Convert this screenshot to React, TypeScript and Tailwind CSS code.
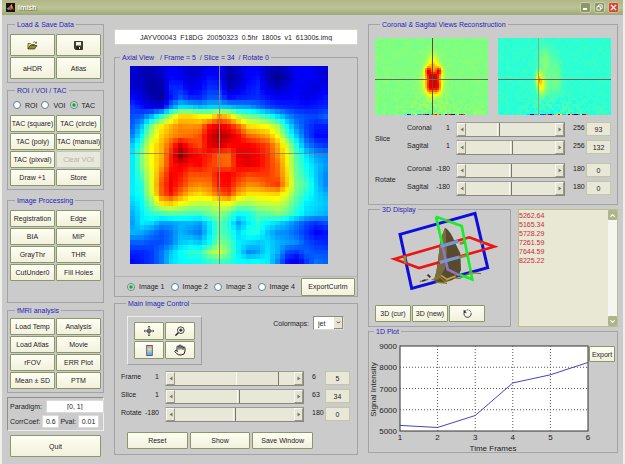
import React from 'react';
import { Hand, ChevronDown, ChevronUp } from 'lucide-react';

// Coarse axial slice, 0 = dark blue, 99 = dark red
const AXIAL: number[][] = [
  [8, 6, 5, 8, 12, 10, 7, 8, 11, 12, 5, 8, 12, 12, 6, 5, 8, 12, 12, 10, 9],
  [8, 6, 4, 6, 13, 12, 8, 10, 14, 13, 2, 6, 12, 14, 6, 1, 5, 11, 12, 11, 8],
  [8, 7, 3, 4, 16, 16, 10, 12, 17, 16, 5, 9, 14, 16, 9, 6, 9, 12, 10, 9, 11],
  [13, 9, 5, 3, 14, 21, 16, 16, 21, 21, 13, 15, 16, 17, 14, 12, 12, 13, 10, 12, 14],
  [18, 14, 10, 10, 25, 35, 34, 31, 33, 33, 32, 29, 28, 24, 20, 17, 16, 15, 14, 15, 16],
  [20, 22, 30, 42, 56, 66, 66, 63, 62, 72, 67, 55, 50, 47, 42, 35, 27, 22, 20, 19, 22],
  [22, 32, 50, 64, 70, 74, 73, 74, 86, 90, 86, 78, 66, 64, 62, 54, 38, 26, 19, 15, 15],
  [26, 38, 56, 67, 73, 76, 77, 80, 91, 96, 93, 87, 78, 75, 71, 62, 46, 32, 20, 13, 13],
  [33, 45, 62, 70, 80, 92, 84, 80, 90, 92, 87, 88, 88, 85, 81, 71, 58, 40, 26, 20, 18],
  [36, 50, 63, 70, 85, 99, 90, 87, 84, 78, 77, 90, 90, 88, 83, 74, 63, 45, 35, 28, 26],
  [36, 50, 62, 71, 85, 89, 86, 88, 82, 79, 77, 88, 90, 88, 83, 77, 64, 47, 38, 32, 28],
  [36, 46, 60, 76, 88, 86, 80, 80, 80, 87, 88, 84, 81, 82, 82, 78, 66, 48, 40, 32, 26],
  [36, 42, 60, 79, 89, 83, 76, 74, 76, 86, 87, 79, 74, 75, 79, 82, 68, 50, 44, 33, 26],
  [36, 40, 58, 78, 86, 76, 68, 66, 70, 78, 82, 70, 65, 65, 66, 67, 60, 48, 40, 34, 30],
  [33, 38, 50, 65, 68, 62, 58, 56, 56, 60, 62, 54, 53, 56, 57, 58, 53, 44, 36, 34, 32],
  [30, 36, 42, 44, 46, 46, 44, 44, 48, 52, 46, 38, 40, 46, 47, 50, 47, 40, 34, 32, 30],
  [28, 36, 34, 28, 28, 30, 30, 28, 36, 46, 40, 28, 36, 42, 37, 34, 30, 25, 20, 17, 20],
  [30, 29, 25, 21, 24, 30, 27, 24, 35, 46, 42, 34, 40, 40, 32, 27, 26, 22, 17, 12, 14],
  [22, 22, 20, 20, 24, 32, 34, 32, 38, 50, 46, 36, 34, 32, 34, 30, 28, 26, 20, 17, 16],
  [16, 16, 18, 24, 32, 38, 42, 42, 52, 58, 48, 36, 26, 28, 35, 30, 20, 18, 22, 20, 20],
  [13, 15, 18, 24, 34, 37, 38, 38, 42, 44, 42, 38, 37, 38, 36, 26, 14, 10, 18, 24, 22],
];

const clamp = (v: number) => Math.max(0, Math.min(1, v));

const jet = (v: number) => {
  const t = clamp(v) * 4;
  const channel = (center: number) => Math.round(255 * clamp(1.5 - Math.abs(t - center)));
  return `rgb(${channel(3)},${channel(2)},${channel(1)})`;
};

// x and y run from 0 to 1
const sampleAxial = (x: number, y: number) => {
  const gx = x * 20;
  const gy = y * 20;
  const i = Math.min(19, Math.floor(gx));
  const j = Math.min(19, Math.floor(gy));
  const u = gx - i;
  const v = gy - j;
  const top = AXIAL[j][i] * (1 - u) + AXIAL[j][i + 1] * u;
  const bottom = AXIAL[j + 1][i] * (1 - u) + AXIAL[j + 1][i + 1] * u;
  return (top * (1 - v) + bottom * v) / 100;
};

const noise = (x: number, y: number) => {
  const s = Math.sin(x * 127.1 + y * 311.7) * 43758.5453;
  return s - Math.floor(s) - 0.5;
};

// [cx, cy, rx, ry, height]
type Blob = [number, number, number, number, number];

const CORONAL_BLOBS: Blob[] = [
  [57, 42, 9, 15, 0.18],
  [57, 26, 5, 10, 0.13],
  [52, 32, 3, 4, 0.3],
  [63, 32, 3, 4, 0.3],
  [57, 38, 6, 4, 0.26],
  [54, 47, 4, 7, 0.28],
  [61, 47, 4, 7, 0.28],
];

const SAGITTAL_BLOBS: Blob[] = [
  [40, 40, 3, 7, 0.24],
  [43, 48, 4, 9, 0.14],
  [46, 24, 6, 16, 0.09],
  [57, 34, 5, 16, 0.06],
  [50, 48, 13, 12, 0.04],
];

const project = (blobs: Blob[], base: number, x: number, y: number) => {
  let v = base;
  blobs.forEach(([cx, cy, rx, ry, h]) => {
    v += h * Math.exp(-(((x - cx) / rx) ** 2) - ((y - cy) / ry) ** 2);
  });
  const spread = 0.02 + (y > 52 ? (y - 52) * 0.004 : 0) * Math.exp(-(((x - 58) / 36) ** 2));
  v += noise(x, y) * spread;
  if (y >= 75 && x > 26 && x < 90) v += noise(x + 7, y) * 1.1;
  return Math.min(0.91, v);
};

const AxialMap = () => {
  const n = 41;
  return (
    <svg viewBox={`0 0 ${n} ${n}`} className="block aspect-square w-full" shapeRendering="crispEdges" role="img" aria-label="Axial slice">
      {Array.from({ length: n * n }, (_, k) => {
        const x = k % n;
        const y = Math.floor(k / n);
        return <rect key={k} x={x} y={y} width={1.05} height={1.05} fill={jet(sampleAxial(x / (n - 1), y / (n - 1)))} />;
      })}
      <path d="M18.5 0V41" stroke="#8c8380" strokeWidth={0.2} />
      <path d="M0 18.1H41" stroke="#806a68" strokeWidth={0.2} strokeOpacity={0.7} />
    </svg>
  );
};

interface ProjectionProps {
  label: string;
  blobs: Blob[];
  base: number;
  cx: number;
  lineColor: string;
}

const Projection = ({ label, blobs, base, cx, lineColor }: ProjectionProps) => {
  const cells = [];
  for (let y = 0; y < 77; y += 2) {
    for (let x = 0; x < 113; x += 2) {
      cells.push(<rect key={`${x}-${y}`} x={x} y={y} width={2.1} height={2.1} fill={jet(project(blobs, base, x, y))} />);
    }
  }
  return (
    <svg viewBox="0 0 113 77" className="block min-w-0 flex-1" shapeRendering="crispEdges" role="img" aria-label={label}>
      {cells}
      <path d={`M${cx} 0V77`} stroke={lineColor} strokeWidth={1} />
      <path d="M0 41H113" stroke="#6c6458" strokeWidth={1} />
    </svg>
  );
};

const Button = ({ className = 'h-[17px]', children, ...rest }: React.ButtonHTMLAttributes<HTMLButtonElement>) => (
  <button
    type="button"
    className={`flex min-w-0 items-center justify-center whitespace-nowrap rounded-[1px] border border-[#8a9767] bg-linear-to-b from-[#fefef4] to-[#f2f1dc] disabled:border-[#c6c8b4] disabled:bg-none disabled:bg-[#e9e8dc] disabled:text-[#b5b4a6] ${className}`}
    {...rest}
  >
    {children}
  </button>
);

interface PanelProps {
  title: string;
  className?: string;
  children: React.ReactNode;
}

const Panel = ({ title, className = '', children }: PanelProps) => (
  <fieldset className={`min-w-0 border border-[#a3a3a3] ${className}`}>
    <legend className="ml-[5px] px-[2px] leading-[9px] whitespace-pre text-[#2a22b8]">{title}</legend>
    {children}
  </fieldset>
);

interface RadioProps {
  name: string;
  label: string;
  defaultChecked?: boolean;
}

const Radio = ({ name, label, defaultChecked }: RadioProps) => (
  <label className="flex items-center gap-1 whitespace-nowrap">
    <input
      type="radio"
      name={name}
      defaultChecked={defaultChecked}
      className="size-2 shrink-0 appearance-none rounded-full border border-[#5f7d96] bg-white checked:bg-[radial-gradient(circle,#2ba02b_0_1px,#ffffff_3px)]"
    />
    {label}
  </label>
);

const ArrowButton = ({ dir, label }: { dir: 'left' | 'right'; label: string }) => (
  <button type="button" aria-label={label} className="flex w-[9px] shrink-0 items-center justify-center border border-t-[#f8f8f0] border-r-[#98978a] border-b-[#98978a] border-l-[#f8f8f0] bg-[#e6e4d2]">
    <svg viewBox="0 0 4 5" className="h-[5px] w-1 fill-[#77766c]">
      <path d={dir === 'left' ? 'M3.5 0.5V4.5L0.5 2.5Z' : 'M0.5 0.5V4.5L3.5 2.5Z'} />
    </svg>
  </button>
);

interface SliderRowProps {
  label: string;
  name: string;
  min: number;
  max: number;
  value: number;
  labelWidth: string;
  wideThumb?: boolean;
}

const SliderRow = ({ label, name, min, max, value: initial, labelWidth, wideThumb }: SliderRowProps) => {
  const [value, setValue] = React.useState(initial);
  const id = React.useId();
  const thumb = wideThumb ? '[&::-webkit-slider-thumb]:w-[43px]' : '[&::-webkit-slider-thumb]:w-[3px]';
  return (
    <div className="flex h-[15px] items-start">
      <label htmlFor={id} className={`flex shrink-0 justify-between leading-3 ${labelWidth}`}>
        <span>{label}</span>
        <span>{min}</span>
      </label>
      <div className="mx-[6px] flex h-[15px] min-w-0 flex-1 border border-t-[#9c9b90] border-r-[#8a897e] border-b-[#8a897e] border-l-[#c4c3b8]">
        <ArrowButton dir="left" label={`Decrease ${name}`} />
        <input
          id={id}
          type="range"
          min={min}
          max={max}
          value={value}
          onChange={(e) => setValue(Number(e.target.value))}
          className={`h-full min-w-0 flex-1 appearance-none bg-[#e9e8d8] [&::-webkit-slider-thumb]:h-[13px] [&::-webkit-slider-thumb]:appearance-none [&::-webkit-slider-thumb]:border-r [&::-webkit-slider-thumb]:border-l [&::-webkit-slider-thumb]:border-l-[#fbfbf4] [&::-webkit-slider-thumb]:border-r-[#77766c] [&::-webkit-slider-thumb]:bg-[#e6e4d2] ${thumb}`}
        />
        <ArrowButton dir="right" label={`Increase ${name}`} />
      </div>
      <span className="w-[15px] shrink-0 pl-[2px] leading-3">{max}</span>
      <input
        readOnly
        value={value}
        aria-label={`${name} value`}
        className="h-[14px] w-[25px] shrink-0 border border-[#c3c8a4] bg-[#e9e8d8] text-center"
      />
    </div>
  );
};

const OpenIcon = () => (
  <svg viewBox="0 0 22 18" className="h-[9px] w-[11px]">
    <path d="M2 16V5H7L9 7H15V9" fill="#f0e878" stroke="#2d2d12" strokeWidth="1.4" />
    <path d="M2 16L6 9H20L15 16Z" fill="#8e8c2e" stroke="#2d2d12" strokeWidth="1.4" />
    <path d="M12 3C14 1 17 1 18 4M16 4.5H19V1.5" fill="none" stroke="#222" strokeWidth="1.2" />
  </svg>
);

const SaveIcon = () => (
  <svg viewBox="0 0 18 18" className="size-[9px]">
    <path d="M1 1H17V17H3L1 15Z" fill="#45452c" stroke="#15150c" strokeWidth="1.5" />
    <rect x="4" y="2" width="10" height="7" fill="#f2f2ea" />
    <rect x="5" y="11" width="8" height="6" fill="#1c1c12" />
    <rect x="10" y="12" width="2" height="4" fill="#e8e8df" />
  </svg>
);

const CrosshairIcon = () => (
  <svg viewBox="0 0 24 24" className="size-[10px]" fill="none" stroke="#333" strokeWidth="2">
    <path d="M12 0V24M0 12H24" />
    <circle cx="12" cy="12" r="4.5" />
    <path d="M9 3L12 0L15 3M9 21L12 24L15 21M3 9L0 12L3 15M21 9L24 12L21 15" strokeWidth="1.3" />
  </svg>
);

const ZoomIcon = () => (
  <svg viewBox="0 0 24 24" className="size-[10px]" fill="none" stroke="#222">
    <circle cx="14" cy="10" r="8" strokeWidth="2" />
    <path d="M14 6V14M10 10H18" strokeWidth="3" />
    <path d="M8 16L1 23" strokeWidth="3.4" />
  </svg>
);

const ColorbarIcon = () => (
  <svg viewBox="0 0 12 20" className="h-[11px] w-[7px]">
    <rect x="1" y="1" width="10" height="18" fill="#a99be0" stroke="#454a66" strokeWidth="1.6" />
    <rect x="2" y="2" width="8" height="4" fill="#f0a884" />
    <rect x="2" y="6" width="8" height="4" fill="#e8e08c" />
    <rect x="2" y="10" width="8" height="4" fill="#7cdcd8" />
    <rect x="2" y="14" width="8" height="4" fill="#7aa4e8" />
  </svg>
);

const RotateIcon = () => (
  <svg viewBox="0 0 20 20" className="size-[9px]" fill="none" stroke="#222" strokeWidth="1.8">
    <path d="M5 4A8 8 0 0 1 18 9" strokeDasharray="2.5 1.5" />
    <path d="M18 9A8 8 0 1 1 3 7" />
    <path d="M2 2V8H8" fill="#222" strokeWidth="1" />
  </svg>
);

const VolumeView = () => (
  <svg viewBox="30 42 387 246" className="block h-[82px] w-full overflow-visible" fill="none" role="img" aria-label="3D volume">
    <path d="M105 103L330 40L368 203L140 265Z" stroke="#0d0dde" strokeWidth="9" />
    <path d="M240 84C252 88 264 110 270 128L286 160L288 210L280 228L262 240L236 248L206 244L214 215L220 176L226 120Z" fill="#584a2c" />
    <path d="M240 84C246 98 240 120 246 150L242 200L222 238L206 244L214 215L220 176L226 120Z" fill="#7b6c40" />
    <path d="M164 245L190 238M186 225L196 231M200 240L222 230L240 244L262 232L282 236L318 218L348 221M212 246L246 250" stroke="#8a7a2c" strokeWidth="4" />
    <path d="M188 224L196 232M172 243L182 240" stroke="#333" strokeWidth="5" />
    <path d="M228 226L246 238L272 228" stroke="#c0a83a" strokeWidth="5" />
    <path d="M88 177L313 112L388 140L162 204Z" stroke="#ec1414" strokeWidth="8" />
    <path d="M213 50L290 78L322 238L284 224" stroke="#16ee2c" strokeWidth="8" />
    <path d="M213 50L232 134" stroke="#16ee2c" strokeWidth="8" />
    <path d="M232 134L248 208L284 226" stroke="#8f74c8" strokeWidth="8" />
    <path d="M226 139L280 124M224 187L284 171" stroke="#6c9cd4" strokeWidth="10" />
    <path d="M244 64L254 61M284 131L298 127M284 172L306 166M350 127L352 133M119 168L121 190M312 214L320 218" stroke="#84913c" strokeWidth="8" />
  </svg>
);

const SIGNAL = [5262.64, 5165.34, 5728.29, 7261.59, 7644.59, 8225.22];

const SignalPlot = () => {
  const left = 31;
  const right = 219;
  const top = 10;
  const bottom = 95;
  const px = (frame: number) => left + ((frame - 1) / 5) * (right - left);
  const py = (v: number) => bottom - ((v - 5000) / 4000) * (bottom - top);
  return (
    <svg viewBox="0 0 219 116" className="block h-[116px] min-w-0 flex-1 overflow-visible text-[8px]" role="img" aria-label="Signal intensity by time frame">
      <rect x={left} y={top} width={right - left} height={bottom - top} fill="#fff" stroke="#333" strokeWidth="1" />
      {[2, 3, 4, 5].map((f) => (
        <path key={f} d={`M${px(f)} ${top}V${bottom}`} stroke="#555" strokeWidth="1" strokeDasharray="1 2" />
      ))}
      {[6000, 7000, 8000].map((v) => (
        <path key={v} d={`M${left} ${py(v)}H${right}`} stroke="#555" strokeWidth="1" strokeDasharray="1 2" />
      ))}
      {[5000, 6000, 7000, 8000, 9000].map((v) => (
        <text key={v} x={left - 3} y={py(v) + 3} textAnchor="end" fill="#222">{v}</text>
      ))}
      {[1, 2, 3, 4, 5, 6].map((f) => (
        <text key={f} x={px(f)} y={bottom + 9} textAnchor="middle" fill="#222">{f}</text>
      ))}
      <text x={(left + right) / 2 - 1} y={bottom + 20} textAnchor="middle" fill="#222">Time Frames</text>
      <text transform={`translate(7 ${(top + bottom) / 2 + 1}) rotate(-90)`} textAnchor="middle" fill="#222">Signal Intensity</text>
      <polyline points={SIGNAL.map((v, i) => `${px(i + 1)},${py(v)}`).join(' ')} fill="none" stroke="#4444c4" strokeWidth="1" />
    </svg>
  );
};

const TitleBar = () => (
  <header className="flex h-[15px] items-center bg-linear-to-b from-[#b0b689] via-[#bcc394] to-[#9fa878] px-1">
    <svg viewBox="0 0 18 18" className="size-[9px]" aria-hidden="true">
      <rect width="18" height="18" fill="#15120f" />
      <path d="M1 11L6 8L9 12L5 14Z" fill="#4c9cc4" />
      <path d="M6 8L11 2L16 14L12 12L9 15L8 12Z" fill="#d8501c" />
      <path d="M10 4L11 2L13 9L11 10Z" fill="#f4b848" />
    </svg>
    <h1 className="ml-[3px] flex-1 font-['Open_Sans',sans-serif] text-[7px] font-semibold leading-3 text-white [text-shadow:1px_1px_0_#6f784c]">imish</h1>
    <div className="flex gap-[3px]">
      <button type="button" aria-label="Minimize" className="flex size-[11px] items-end justify-start rounded-[2px] border border-[#c9cea8] bg-[#8b9766] p-[2px]">
        <span className="h-[2px] w-1 bg-white" />
      </button>
      <button type="button" aria-label="Restore" className="flex size-[11px] items-center justify-center rounded-[2px] border border-[#c9cea8] bg-[#8b9766]">
        <svg viewBox="0 0 8 8" className="size-[7px]" fill="none" stroke="#fff"><path d="M3 3V1H7V5H5M1 3H5V7H1Z" /></svg>
      </button>
      <button type="button" aria-label="Close" className="flex size-[11px] items-center justify-center rounded-[2px] border border-[#dcb8a4] bg-[#cf4a2e]">
        <svg viewBox="0 0 8 8" className="size-[7px]" fill="none" stroke="#fff" strokeWidth="1.6"><path d="M1 1L7 7M7 1L1 7" /></svg>
      </button>
    </div>
  </header>
);

const ButtonGrid = ({ labels, disabled = [] }: { labels: string[]; disabled?: string[] }) => (
  <div className="grid grid-cols-2 gap-px">
    {labels.map((label) => (
      <Button key={label} disabled={disabled.includes(label)}>{label}</Button>
    ))}
  </div>
);

const LeftColumn = () => (
  <div className="flex min-w-0 flex-col">
    <Panel title="Load & Save Data" className="px-[2px] pt-[5px] pb-[3px]">
      <div className="grid grid-cols-2 gap-px">
        <Button className="h-[22px]" aria-label="Open"><OpenIcon /></Button>
        <Button className="h-[22px]" aria-label="Save"><SaveIcon /></Button>
        <Button className="h-[22px]">aHDR</Button>
        <Button className="h-[22px]">Atlas</Button>
      </div>
    </Panel>
    <Panel title="ROI / VOI / TAC" className="mt-[3px] px-[2px] pt-1 pb-[3px]">
      <div className="mb-1 flex h-3 items-center justify-between pr-[6px] pl-[3px]">
        <Radio name="region" label="ROI" />
        <Radio name="region" label="VOI" />
        <Radio name="region" label="TAC" defaultChecked />
      </div>
      <ButtonGrid
        labels={['TAC (square)', 'TAC (circle)', 'TAC (poly)', 'TAC (manual)', 'TAC (pixval)', 'Clear VOI', 'Draw +1', 'Store']}
        disabled={['Clear VOI']}
      />
    </Panel>
    <Panel title="Image Processing" className="mt-[6px] px-[2px] pt-[5px] pb-[21px]">
      <ButtonGrid labels={['Registration', 'Edge', 'BIA', 'MIP', 'GrayThr', 'THR', 'CutUnder0', 'Fill Holes']} />
    </Panel>
    <Panel title="fMRI analysis" className="mt-[3px] px-[2px] pt-[3px] pb-[3px]">
      <ButtonGrid labels={['Load Temp', 'Analysis', 'Load Atlas', 'Movie', 'rFOV', 'ERR Plot', 'Mean ± SD', 'PTM']} />
    </Panel>
    <div className="mt-1 flex flex-col gap-[2px] border border-t-[#8f8f8f] border-r-[#eeeeee] border-b-[#eeeeee] border-l-[#8f8f8f] py-[2px] pr-1 pl-[2px]">
      <label className="flex h-[13px] items-center justify-between gap-1">
        Paradigm:
        <input defaultValue="[0, 1]" className="h-full w-[58px] border border-[#dadada] bg-white text-center" />
      </label>
      <div className="flex h-[13px] items-center justify-between">
        <label className="flex h-full items-center gap-[2px]">
          CorrCoef:
          <input defaultValue="0.6" className="h-full w-[17px] border border-[#dadada] bg-white text-center" />
        </label>
        <label className="flex h-full items-center gap-[2px]">
          Pval:
          <input defaultValue="0.01" className="h-full w-[21px] border border-[#dadada] bg-white text-center" />
        </label>
      </div>
    </div>
    <Button className="mx-[3px] mt-1 h-[22px]">Quit</Button>
  </div>
);

const MiddleColumn = () => (
  <div className="flex min-w-0 flex-col">
    <input
      readOnly
      aria-label="File name"
      value="JAYV00043_F18DG_20050323_0.5hr_1800s_v1_61300s.img"
      className="mt-[9px] h-4 w-full border border-[#d4d6c0] bg-white text-center"
    />
    <Panel title="Axial View   / Frame = 5  / Slice = 34  / Rotate 0" className="mt-2">
      <div className="pt-1 pr-[29px] pl-[15px]">
        <AxialMap />
      </div>
      <div className="mt-3 flex h-5 items-center justify-between border-t border-[#b4b4b4] pr-[2px] pl-3">
        <Radio name="image" label="Image 1" defaultChecked />
        <Radio name="image" label="Image 2" />
        <Radio name="image" label="Image 3" />
        <Radio name="image" label="Image 4" />
        <Button className="h-[18px] w-[54px]">ExportCurIm</Button>
      </div>
    </Panel>
    <Panel title="Main Image Control" className="mt-[2px] pt-2 pr-[7px] pb-[5px] pl-[6px]">
      <div className="flex items-start justify-between">
        <div className="ml-[6px] grid grid-cols-[30px_30px] gap-px border border-t-[#eeeeee] border-r-[#a0a0a0] border-b-[#a0a0a0] border-l-[#eeeeee] px-[6px] py-[5px]">
          <Button aria-label="Crosshair" className="h-[18px] from-[#ece4d0] to-[#ece4d0]"><CrosshairIcon /></Button>
          <Button aria-label="Zoom" className="h-[18px] from-[#ece4d0] to-[#ece4d0]"><ZoomIcon /></Button>
          <Button aria-label="Colorbar" className="h-[18px]"><ColorbarIcon /></Button>
          <Button aria-label="Pan" className="h-[18px]"><Hand size={12} strokeWidth={2} color="#222" /></Button>
        </div>
        <label className="mr-[6px] flex items-center gap-1">
          Colormaps:
          <span className="relative flex">
            <select className="h-[14px] w-[31px] appearance-none border border-t-[#8e8d84] border-r-[#dddccb] border-b-[#dddccb] border-l-[#8e8d84] bg-white pl-1" defaultValue="jet">
              <option>jet</option>
              <option>hot</option>
              <option>gray</option>
            </select>
            <span className="pointer-events-none absolute top-px right-px flex h-3 w-[9px] items-center justify-center border-r border-b border-[#8e8d84] bg-[#e6e4d2]">
              <ChevronDown size={5} strokeWidth={4} />
            </span>
          </span>
        </label>
      </div>
      <div className="mt-[6px] flex flex-col gap-[3px]">
        <SliderRow label="Frame" name="Frame" min={1} max={6} value={5} labelWidth="w-[38px]" wideThumb />
        <SliderRow label="Slice" name="Slice" min={1} max={63} value={34} labelWidth="w-[38px]" />
        <SliderRow label="Rotate" name="Rotate" min={-180} max={180} value={0} labelWidth="w-[38px]" />
      </div>
      <div className="mt-[10px] mr-[37px] ml-[6px] grid grid-cols-3 gap-[2px]">
        <Button>Reset</Button>
        <Button>Show</Button>
        <Button>Save Window</Button>
      </div>
    </Panel>
  </div>
);

const RightColumn = () => (
  <div className="flex min-w-0 flex-col">
    <Panel title="Coronal & Sagital Views Reconstruction" className="px-[6px] pt-[9px] pb-2">
      <div className="flex gap-[10px]">
        <Projection label="Coronal view" blobs={CORONAL_BLOBS} base={0.5} cx={57.5} lineColor="#6b4a20" />
        <Projection label="Sagittal view" blobs={SAGITTAL_BLOBS} base={0.42} cx={40.5} lineColor="#86b070" />
      </div>
      <div className="mt-[7px] flex flex-col gap-2">
        <div className="flex items-center">
          <span className="w-8 shrink-0">Slice</span>
          <div className="flex min-w-0 flex-1 flex-col gap-[3px]">
            <SliderRow label="Coronal" name="Coronal slice" min={1} max={256} value={93} labelWidth="w-[43px]" />
            <SliderRow label="Sagital" name="Sagital slice" min={1} max={256} value={132} labelWidth="w-[43px]" />
          </div>
        </div>
        <div className="flex items-center">
          <span className="w-8 shrink-0">Rotate</span>
          <div className="flex min-w-0 flex-1 flex-col gap-[3px]">
            <SliderRow label="Coronal" name="Coronal rotation" min={-180} max={180} value={0} labelWidth="w-[43px]" />
            <SliderRow label="Sagital" name="Sagital rotation" min={-180} max={180} value={0} labelWidth="w-[43px]" />
          </div>
        </div>
      </div>
    </Panel>
    <div className="grid grid-cols-[143fr_100fr] gap-[7px]">
      <Panel title="3D Display" className="px-[6px] pb-1">
        <VolumeView />
        <div className="mt-[9px] flex gap-px">
          <Button className="h-[17px] w-9">3D (cur)</Button>
          <Button className="h-[17px] w-9">3D (new)</Button>
          <Button className="h-[17px] w-9" aria-label="Rotate 3D"><RotateIcon /></Button>
        </div>
      </Panel>
      <div className="mt-1 flex min-w-0 border border-[#b9c08e] bg-[#e9e8d4]">
        <select size={6} aria-label="Signal values" className="min-w-0 flex-1 overflow-hidden pt-[2px] text-[#c8283c]">
          {SIGNAL.map((v) => (
            <option key={v} className="h-[9px] p-0">{v.toFixed(2)}</option>
          ))}
        </select>
        <div className="flex w-[9px] flex-col justify-between bg-[#f6f6f0]">
          <button type="button" aria-label="Scroll up" className="flex h-[10px] items-center justify-center rounded-[1px] bg-[#adb689] text-white"><ChevronUp size={7} strokeWidth={4} /></button>
          <button type="button" aria-label="Scroll down" className="flex h-[10px] items-center justify-center rounded-[1px] bg-[#adb689] text-white"><ChevronDown size={7} strokeWidth={4} /></button>
        </div>
      </div>
    </div>
    <Panel title="1D Plot">
      <div className="flex items-start">
        <SignalPlot />
        <Button className="mt-[10px] mr-[2px] ml-px h-4 w-[26px]">Export</Button>
      </div>
    </Panel>
  </div>
);

export default function App() {
  return (
    <div className="flex min-h-screen flex-col border-x-2 border-[#efefec] bg-[#cbcbcb] font-['Liberation_Sans',Arial,sans-serif] text-[7px] leading-[9px] text-[#1c1c1c]">
      <TitleBar />
      <main className="grid grid-cols-[97fr_244fr_250fr] gap-x-[10px] px-[5px] pt-[5px]">
        <LeftColumn />
        <MiddleColumn />
        <RightColumn />
      </main>
    </div>
  );
}
